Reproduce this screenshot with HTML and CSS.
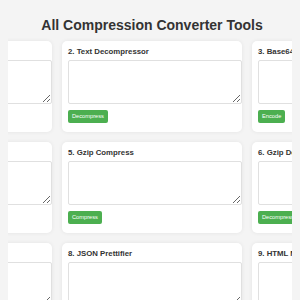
FILE: index.html
```html
<!DOCTYPE html>
<html lang="en">
<head>
    <meta charset="UTF-8">
    <meta name="viewport" content="width=device-width, initial-scale=1.0">
    <title>All Compression Converter Tools</title>
    <link rel="stylesheet" href="styles.css">
</head>
<body>
    <section class="wrap">
        <h1 class="page-title">All Compression Converter Tools</h1>
        <div class="tools">
            <div class="tool">
                <h3>1. Text Compressor</h3>
                <textarea></textarea>
                <button>Compress</button>
            </div>
            <div class="tool">
                <h3>2. Text Decompressor</h3>
                <textarea></textarea>
                <button>Decompress</button>
            </div>
            <div class="tool">
                <h3>3. Base64 Encoder</h3>
                <textarea></textarea>
                <button>Encode</button>
            </div>
            <div class="tool">
                <h3>4. Base64 Decoder</h3>
                <textarea></textarea>
                <button>Decode</button>
            </div>
            <div class="tool">
                <h3>5. Gzip Compress</h3>
                <textarea></textarea>
                <button>Compress</button>
            </div>
            <div class="tool">
                <h3>6. Gzip Decompress</h3>
                <textarea></textarea>
                <button>Decompress</button>
            </div>
            <div class="tool">
                <h3>7. JSON Minifier</h3>
                <textarea></textarea>
                <button>Minify</button>
            </div>
            <div class="tool">
                <h3>8. JSON Prettifier</h3>
                <textarea></textarea>
                <button>Prettify</button>
            </div>
            <div class="tool">
                <h3>9. HTML Minifier</h3>
                <textarea></textarea>
                <button>Minify</button>
            </div>
        </div>
    </section>
</body>
</html>
```
FILE: styles.css
```css
* {
    margin: 0;
    padding: 0;
}

body {
    margin: 8px;
    background: #f4f4f4;
    font-family: "Liberation Sans", Arial, sans-serif;
    color: #333;
}

.wrap {
    margin-left: 4px;
}

.page-title {
    margin: 9px 0 8px;
    font-size: 14px;
    line-height: 16px;
    text-align: center;
    color: #333;
}

.tools {
    display: grid;
    grid-template-columns: repeat(3, 180px);
    justify-content: center;
    gap: 10px;
}

.tool {
    box-sizing: border-box;
    height: 91px;
    padding: 6px;
    background: #fff;
    border-radius: 5px;
    box-shadow: 0 0 4px rgba(0, 0, 0, 0.07);
}

.tool h3 {
    margin-bottom: 4px;
    font-size: 7.8px;
    line-height: 9px;
    color: #333;
}

.tool textarea {
    display: block;
    width: 100%;
    height: 38px;
    padding: 2px;
    border: 1px solid #e0e0e0;
    border-radius: 2px;
    resize: vertical;
    font-family: inherit;
}

.tool button {
    margin-top: 4px;
    padding: 0 4px;
    height: 13px;
    line-height: 13px;
    font-size: 5.7px;
    font-family: inherit;
    color: #fff;
    background: #4caf50;
    border: none;
    border-radius: 2px;
}
```
